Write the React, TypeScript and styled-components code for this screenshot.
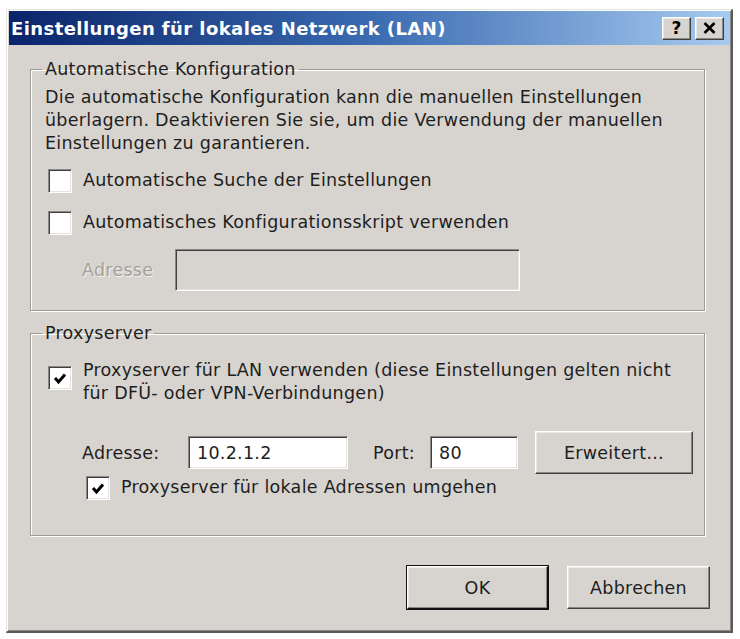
import React from 'react'
import styled, { createGlobalStyle, css } from 'styled-components'

const GlobalStyle = createGlobalStyle`
  html, body {
    margin: 0;
    padding: 0;
    background: #ffffff;
  }
  body {
    font-family: "DejaVu Sans", "Noto Sans", sans-serif;
    font-size: 17.5px;
    letter-spacing: 0.28px;
    color: #1e1e1e;
  }
`

const face = '#d7d4cf'

const raised = css`
  border-top: 1px solid #ffffff;
  border-left: 1px solid #ffffff;
  border-right: 1px solid #404040;
  border-bottom: 1px solid #404040;
  box-shadow: inset -1px -1px #8a8884, inset 1px 1px #ebe9e5;
`

const sunken = css`
  border-top: 1px solid #8a8884;
  border-left: 1px solid #8a8884;
  border-right: 1px solid #ffffff;
  border-bottom: 1px solid #ffffff;
  box-shadow: inset 1px 1px #404040, inset -1px -1px #e4e2de;
`

const Page = styled.div`
  padding: 9px 0 0 6px;
`

const Window = styled.div`
  width: 727px;
  height: 624px;
  box-sizing: border-box;
  background: ${face};
  border-top: 1px solid #e6e4e0;
  border-left: 1px solid #e6e4e0;
  border-right: 2px solid #5a5a5a;
  border-bottom: 2px solid #5a5a5a;
  box-shadow: inset 1px 1px #ffffff, inset -1px -1px #8a8884;
  padding: 1px 1px 0 2px;
  display: flex;
  flex-direction: column;
`

const TitleBar = styled.div`
  height: 34px;
  flex: none;
  display: flex;
  align-items: center;
  padding: 0 6px 0 2px;
  background: linear-gradient(to right, #0a246a 0%, #3a6ab0 50%, #a6caf0 100%);
`

const Title = styled.span`
  flex: 1;
  font-family: "DejaVu Sans", sans-serif;
  font-weight: bold;
  font-size: 18px;
  letter-spacing: 0.42px;
  color: #ffffff;
`

const TitleButton = styled.button`
  ${raised};
  width: 29px;
  height: 23px;
  margin-left: 4px;
  padding: 0;
  background: ${face};
  display: flex;
  align-items: center;
  justify-content: center;
  font-family: "DejaVu Sans", sans-serif;
  font-weight: bold;
  font-size: 17px;
  color: #000;
`

const Body = styled.div`
  flex: 1;
  display: flex;
  flex-direction: column;
  align-items: flex-start;
  padding: 13px 0 0 21px;
`

const Group = styled.fieldset<{ $gapTop?: number; $padBottom: number }>`
  width: 675px;
  box-sizing: border-box;
  margin: ${p => p.$gapTop ?? 0}px 0 0;
  padding: 0 0 ${p => p.$padBottom}px 14px;
  border: 1px solid #9d9a95;
  box-shadow: inset 1px 1px #ffffff, 1px 1px #ffffff;
  display: flex;
  flex-direction: column;
`

const Legend = styled.legend`
  padding: 0 3px;
  margin-left: -3px;
  line-height: 22px;
`

const Description = styled.p`
  margin: 6px 0 0;
  line-height: 23px;
  white-space: nowrap;
`

const CheckRow = styled.label<{ $top: number; $indent?: number }>`
  display: flex;
  align-items: flex-start;
  margin-top: ${p => p.$top}px;
  padding-left: ${p => p.$indent ?? 3}px;
  line-height: 23px;
  white-space: nowrap;
`

const Box = styled.span<{ $offset?: number }>`
  ${sunken};
  width: 24px;
  height: 24px;
  box-sizing: border-box;
  flex: none;
  background: #ffffff;
  margin-top: ${p => p.$offset ?? 0}px;
  margin-right: 11px;
  display: flex;
  align-items: center;
  justify-content: center;
`

const FieldRow = styled.div<{ $top: number; $indent: number }>`
  display: flex;
  align-items: center;
  margin-top: ${p => p.$top}px;
  padding-left: ${p => p.$indent}px;
  white-space: nowrap;
`

const FieldLabel = styled.span<{ $disabled?: boolean; $width?: number; $gap?: number }>`
  width: ${p => (p.$width ? `${p.$width}px` : 'auto')};
  margin-left: ${p => p.$gap ?? 0}px;
  color: ${p => (p.$disabled ? '#a3a19c' : 'inherit')};
  text-shadow: ${p => (p.$disabled ? '1px 1px #f4f3f1' : 'none')};
`

const TextField = styled.div<{ $width: number; $height: number; $disabled?: boolean }>`
  ${sunken};
  width: ${p => p.$width}px;
  height: ${p => p.$height}px;
  box-sizing: border-box;
  background: ${p => (p.$disabled ? face : '#ffffff')};
  padding-left: 8px;
  display: flex;
  align-items: center;
  flex: none;
`

const PushButton = styled.button<{ $width: number; $default?: boolean; $gap?: number }>`
  ${raised};
  width: ${p => p.$width}px;
  height: 43px;
  margin-left: ${p => p.$gap ?? 0}px;
  padding: 0;
  background: ${face};
  font-family: "DejaVu Sans", sans-serif;
  font-size: 17.5px;
  letter-spacing: 0.28px;
  color: #1e1e1e;
  ${p =>
    p.$default &&
    css`
      outline: 1px solid #101010;
      outline-offset: 0;
      border-right-color: #101010;
      border-bottom-color: #101010;
    `}
`

const ButtonRow = styled.div`
  align-self: stretch;
  display: flex;
  justify-content: flex-end;
  gap: 19px;
  margin-top: 30px;
  padding-right: 20px;
`

const Check = () => (
  <svg width="14" height="13" viewBox="0 0 14 13">
    <polyline points="2,6 5.5,10 12,2.5" fill="none" stroke="#000" strokeWidth="3" />
  </svg>
)

const CheckBox: React.FC<{ checked?: boolean; offset?: number }> = ({ checked, offset }) => (
  <Box $offset={offset}>{checked && <Check />}</Box>
)

const App: React.FC = () => {
  return (
    <Page>
      <GlobalStyle />
      <Window>
        <TitleBar>
          <Title>Einstellungen für lokales Netzwerk (LAN)</Title>
          <TitleButton>?</TitleButton>
          <TitleButton>
            <svg width="13" height="12" viewBox="0 0 13 12">
              <path d="M1.5 1 L11.5 11 M11.5 1 L1.5 11" stroke="#000" strokeWidth="2.6" />
            </svg>
          </TitleButton>
        </TitleBar>
        <Body>
          <Group $padBottom={19}>
            <Legend>Automatische Konfiguration</Legend>
            <Description>
              Die automatische Konfiguration kann die manuellen Einstellungen
              <br />
              überlagern. Deaktivieren Sie sie, um die Verwendung der manuellen
              <br />
              Einstellungen zu garantieren.
            </Description>
            <CheckRow $top={14}>
              <CheckBox />
              Automatische Suche der Einstellungen
            </CheckRow>
            <CheckRow $top={18}>
              <CheckBox />
              Automatisches Konfigurationsskript verwenden
            </CheckRow>
            <FieldRow $top={14} $indent={37}>
              <FieldLabel $disabled $width={93}>Adresse</FieldLabel>
              <TextField $width={345} $height={42} $disabled />
            </FieldRow>
          </Group>

          <Group $gapTop={11} $padBottom={35}>
            <Legend>Proxyserver</Legend>
            <CheckRow $top={15}>
              <CheckBox checked offset={7} />
              <span>
                Proxyserver für LAN verwenden (diese Einstellungen gelten nicht
                <br />
                für DFÜ- oder VPN-Verbindungen)
              </span>
            </CheckRow>
            <FieldRow $top={26} $indent={37}>
              <FieldLabel $width={106}>Adresse:</FieldLabel>
              <TextField $width={160} $height={33}>10.2.1.2</TextField>
              <FieldLabel $width={57} $gap={25}>Port:</FieldLabel>
              <TextField $width={88} $height={33}>80</TextField>
              <PushButton $width={158} $gap={17}>
                Erweitert…
              </PushButton>
            </FieldRow>
            <CheckRow $top={2} $indent={41}>
              <CheckBox checked offset={0} />
              Proxyserver für lokale Adressen umgehen
            </CheckRow>
          </Group>

          <ButtonRow>
            <PushButton $width={141} $default>
              OK
            </PushButton>
            <PushButton $width={143}>Abbrechen</PushButton>
          </ButtonRow>
        </Body>
      </Window>
    </Page>
  )
}

export default App
